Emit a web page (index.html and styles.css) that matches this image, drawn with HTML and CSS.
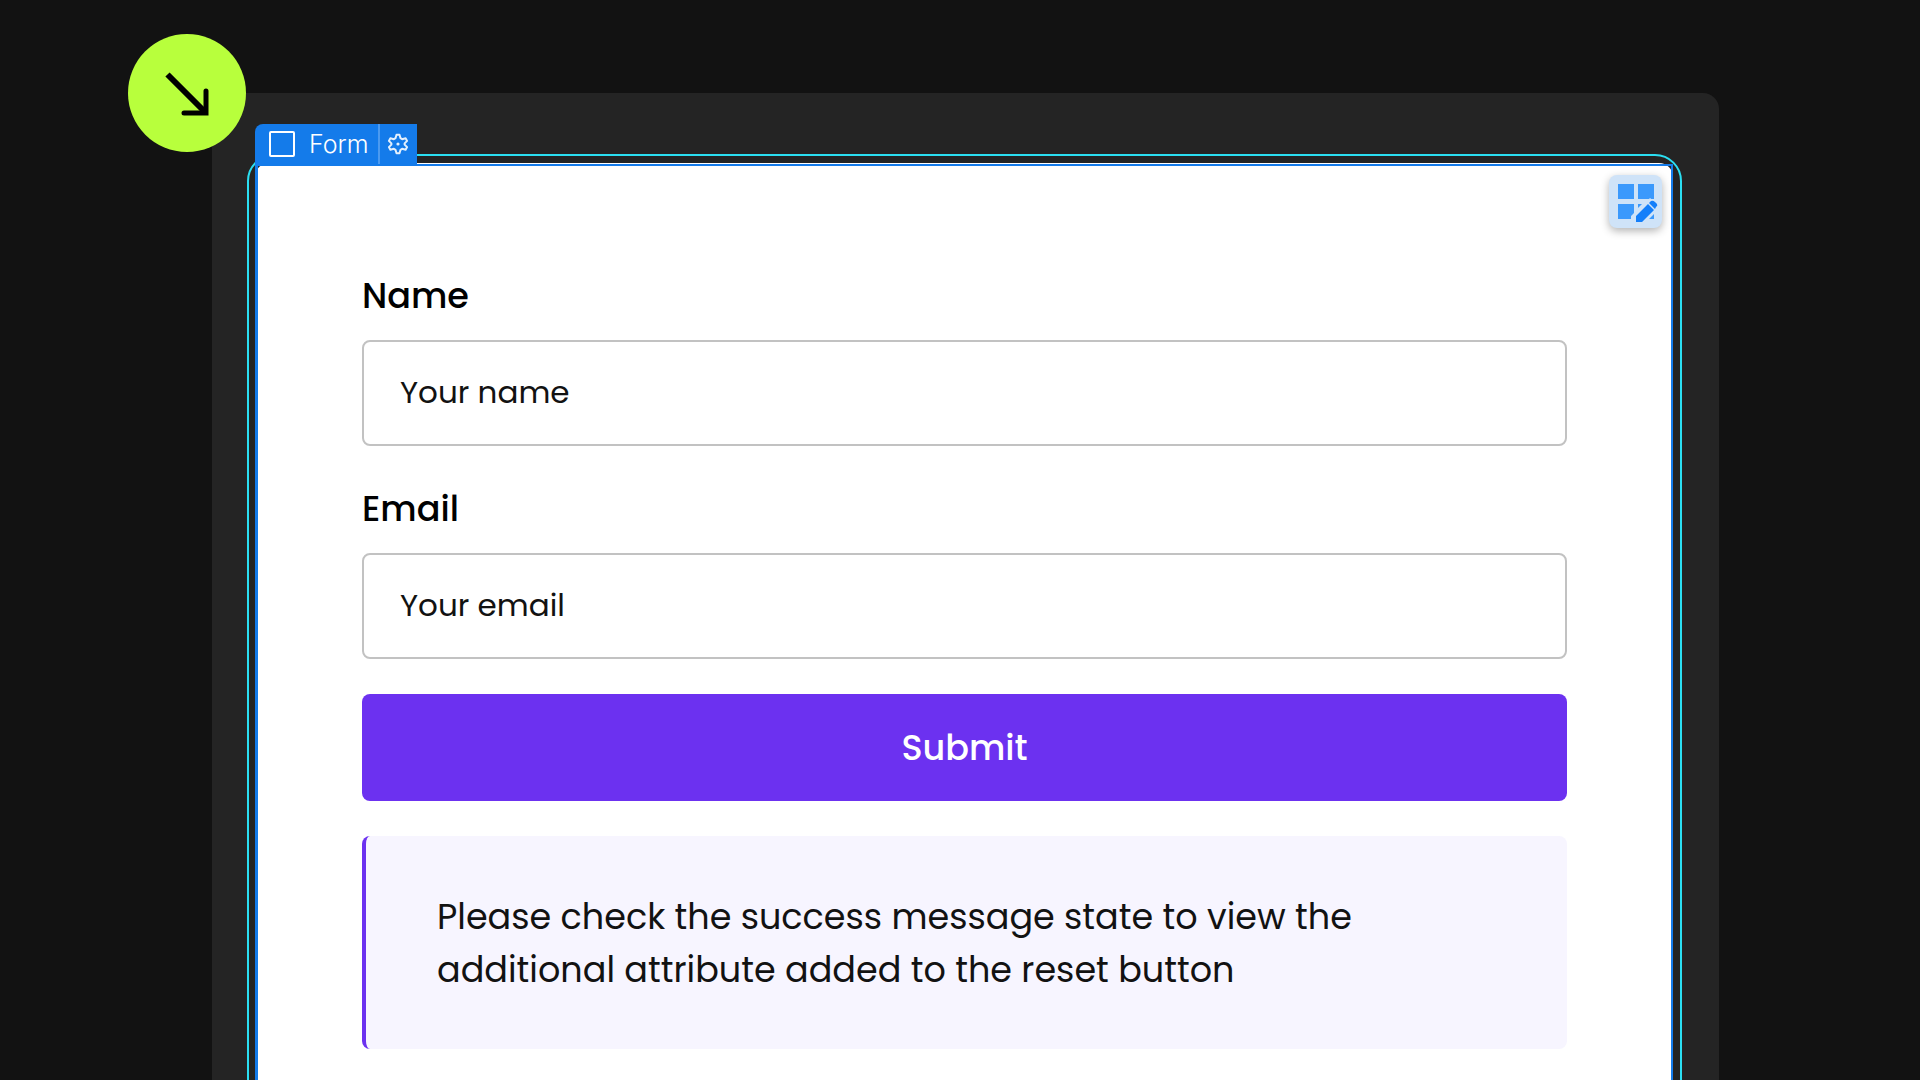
FILE: index.html
```
<!DOCTYPE html>
<html lang="en">
<head>
  <meta charset="UTF-8" />
  <meta name="viewport" content="width=device-width, initial-scale=1" />
  <title>Form</title>
  <link rel="stylesheet" href="styles.css">
</head>
<body>
  <main class="stage">
    <div class="panel">
      <div class="badge">
        <svg viewBox="0 0 118 118" fill="none" stroke="#000" stroke-width="5">
          <path d="M39.5 40.500L77 78" stroke-width="6" />
          <path d="M78 57V79H56" stroke-linecap="round" />
        </svg>
      </div>

      <div class="selection">
        <div class="card">
          <div class="tag">
            <span class="tag-name"><span class="tag-box"></span>Form</span>
            <button class="tag-settings" type="button" aria-label="Settings">
              <svg viewBox="0 0 22 22" fill="none" stroke="currentColor" stroke-width="2" stroke-linejoin="round">
                <path d="M9.5 1.8h3l1 3.4 1.6 1 3.5-.9 1.5 2.6-2.5 2.5v1.2l2.5 2.5-1.5 2.6-3.5-.9-1.6 1-1 3.4h-3l-1-3.4-1.6-1-3.5.9-1.5-2.6 2.500-2.500v-1.200L1.900 7.900l1.500-2.600 3.500.9 1.600-1z" />
                <circle cx="11" cy="11" r="1.6" fill="currentColor" stroke="none" />
              </svg>
            </button>
          </div>

          <button class="edit" type="button" aria-label="Edit layout">
            <svg viewBox="0 0 53 53">
              <path fill="#3b99fc" d="M9 9h16v15H9zM29 9h16v15H29zM9 29h16v9l-3 3v3H9z" />
              <path d="M24 49V40L41 23L52 32L34 49z" fill="#cfe3f8" />
              <path fill="#3b99fc" d="M29 29h4l-4 4zM45 39v5h-5z" />
              <path fill="#147ffa" d="M27 47v-6l12-12 6 6-12 12zM40 28l2-2q2-1 4 1l2 2q1 2-1 3l-1 2z" />
            </svg>
          </button>

          <form class="form">
            <div class="field">
              <label for="name">Name</label>
              <input id="name" type="text" placeholder="Your name">
            </div>
            <div class="field">
              <label for="email">Email</label>
              <input id="email" type="email" placeholder="Your email">
            </div>
            <button class="submit" type="submit">Submit</button>
            <p class="message">Please check the success message state to view the additional attribute added to the reset button</p>
          </form>
        </div>
      </div>
    </div>
  </main>
</body>
</html>
```
FILE: styles.css
```
* {
  box-sizing: border-box;
}

body {
  margin: 0;
  background: #121212;
  font-family: Poppins, Inter, sans-serif;
  color: #121212;
}

.stage {
  height: 100vh;
  overflow: hidden;
  padding: 93px 201px 0 212px;
}

.panel {
  position: relative;
  padding: 61px 37px 61px 35px;
  background: #242424;
  border-radius: 16px;
}

.badge {
  position: absolute;
  top: -59px;
  left: -84px;
  width: 118px;
  height: 118px;
  border-radius: 50%;
  background: #b8ff3c;
}

.badge svg,
.edit svg {
  display: block;
  width: 100%;
  height: 100%;
}

.selection {
  padding: 7px 7px 7px 6px;
  border: 2px solid #2bdff2;
  border-radius: 27px;
}

.card {
  position: relative;
  padding: 105px 106px 105px 107px;
  background: #fff;
  border-radius: 14px;
}

/* selected element outline */
.card::after {
  content: "";
  position: absolute;
  inset: 1px 0 0;
  border: 2px solid #147bea;
  border-left-width: 3px;
  pointer-events: none;
}

.tag {
  position: absolute;
  top: -39px;
  left: 0;
  display: flex;
  height: 40px;
  background: #147bea;
  border-top-left-radius: 8px;
  color: #fff;
  font-family: Inter, sans-serif;
  font-size: 25px;
  font-weight: 300;
}

.tag-name {
  display: flex;
  align-items: center;
  gap: 14px;
  padding: 0 9px 0 14px;
}

.tag-box {
  width: 26px;
  height: 26px;
  border: 2px solid #fff;
  border-radius: 2px;
}

.tag-settings {
  display: flex;
  align-items: center;
  justify-content: center;
  width: 39px;
  padding: 0;
  border: 0;
  border-left: 2px solid #4b9af0;
  background: none;
  color: #e4f0fd;
}

.tag-settings svg {
  width: 22px;
  height: 22px;
}

.edit {
  position: absolute;
  top: 12px;
  right: 11px;
  width: 53px;
  height: 53px;
  padding: 0;
  border: 0;
  border-radius: 8px;
  background: #cfe3f8;
  box-shadow: 0 3px 8px rgba(0, 0, 0, 0.3);
}

.form {
  display: flex;
  flex-direction: column;
  gap: 35px;
}

.field {
  display: flex;
  flex-direction: column;
  gap: 16px;
}

.field label {
  color: #000;
  font-size: 35px;
  font-weight: 500;
  line-height: 56px;
}

.field input {
  width: 100%;
  height: 106px;
  padding: 0 36px 2px;
  border: 2px solid #c2c2c2;
  border-radius: 8px;
  background: #fff;
  color: #121212;
  font-family: inherit;
  font-size: 31px;
}

.field input::placeholder {
  color: #121212;
  opacity: 1;
}

.submit {
  height: 107px;
  border: 0;
  border-radius: 8px;
  background: #6c31f0;
  color: #fff;
  font-family: inherit;
  font-size: 35px;
  font-weight: 500;
}

.message {
  margin: 0;
  padding: 54px 71px 53px;
  border-left: 4px solid #6c31f0;
  border-radius: 8px;
  background: #f7f5ff;
  font-size: 35px;
  line-height: 53px;
}
```
